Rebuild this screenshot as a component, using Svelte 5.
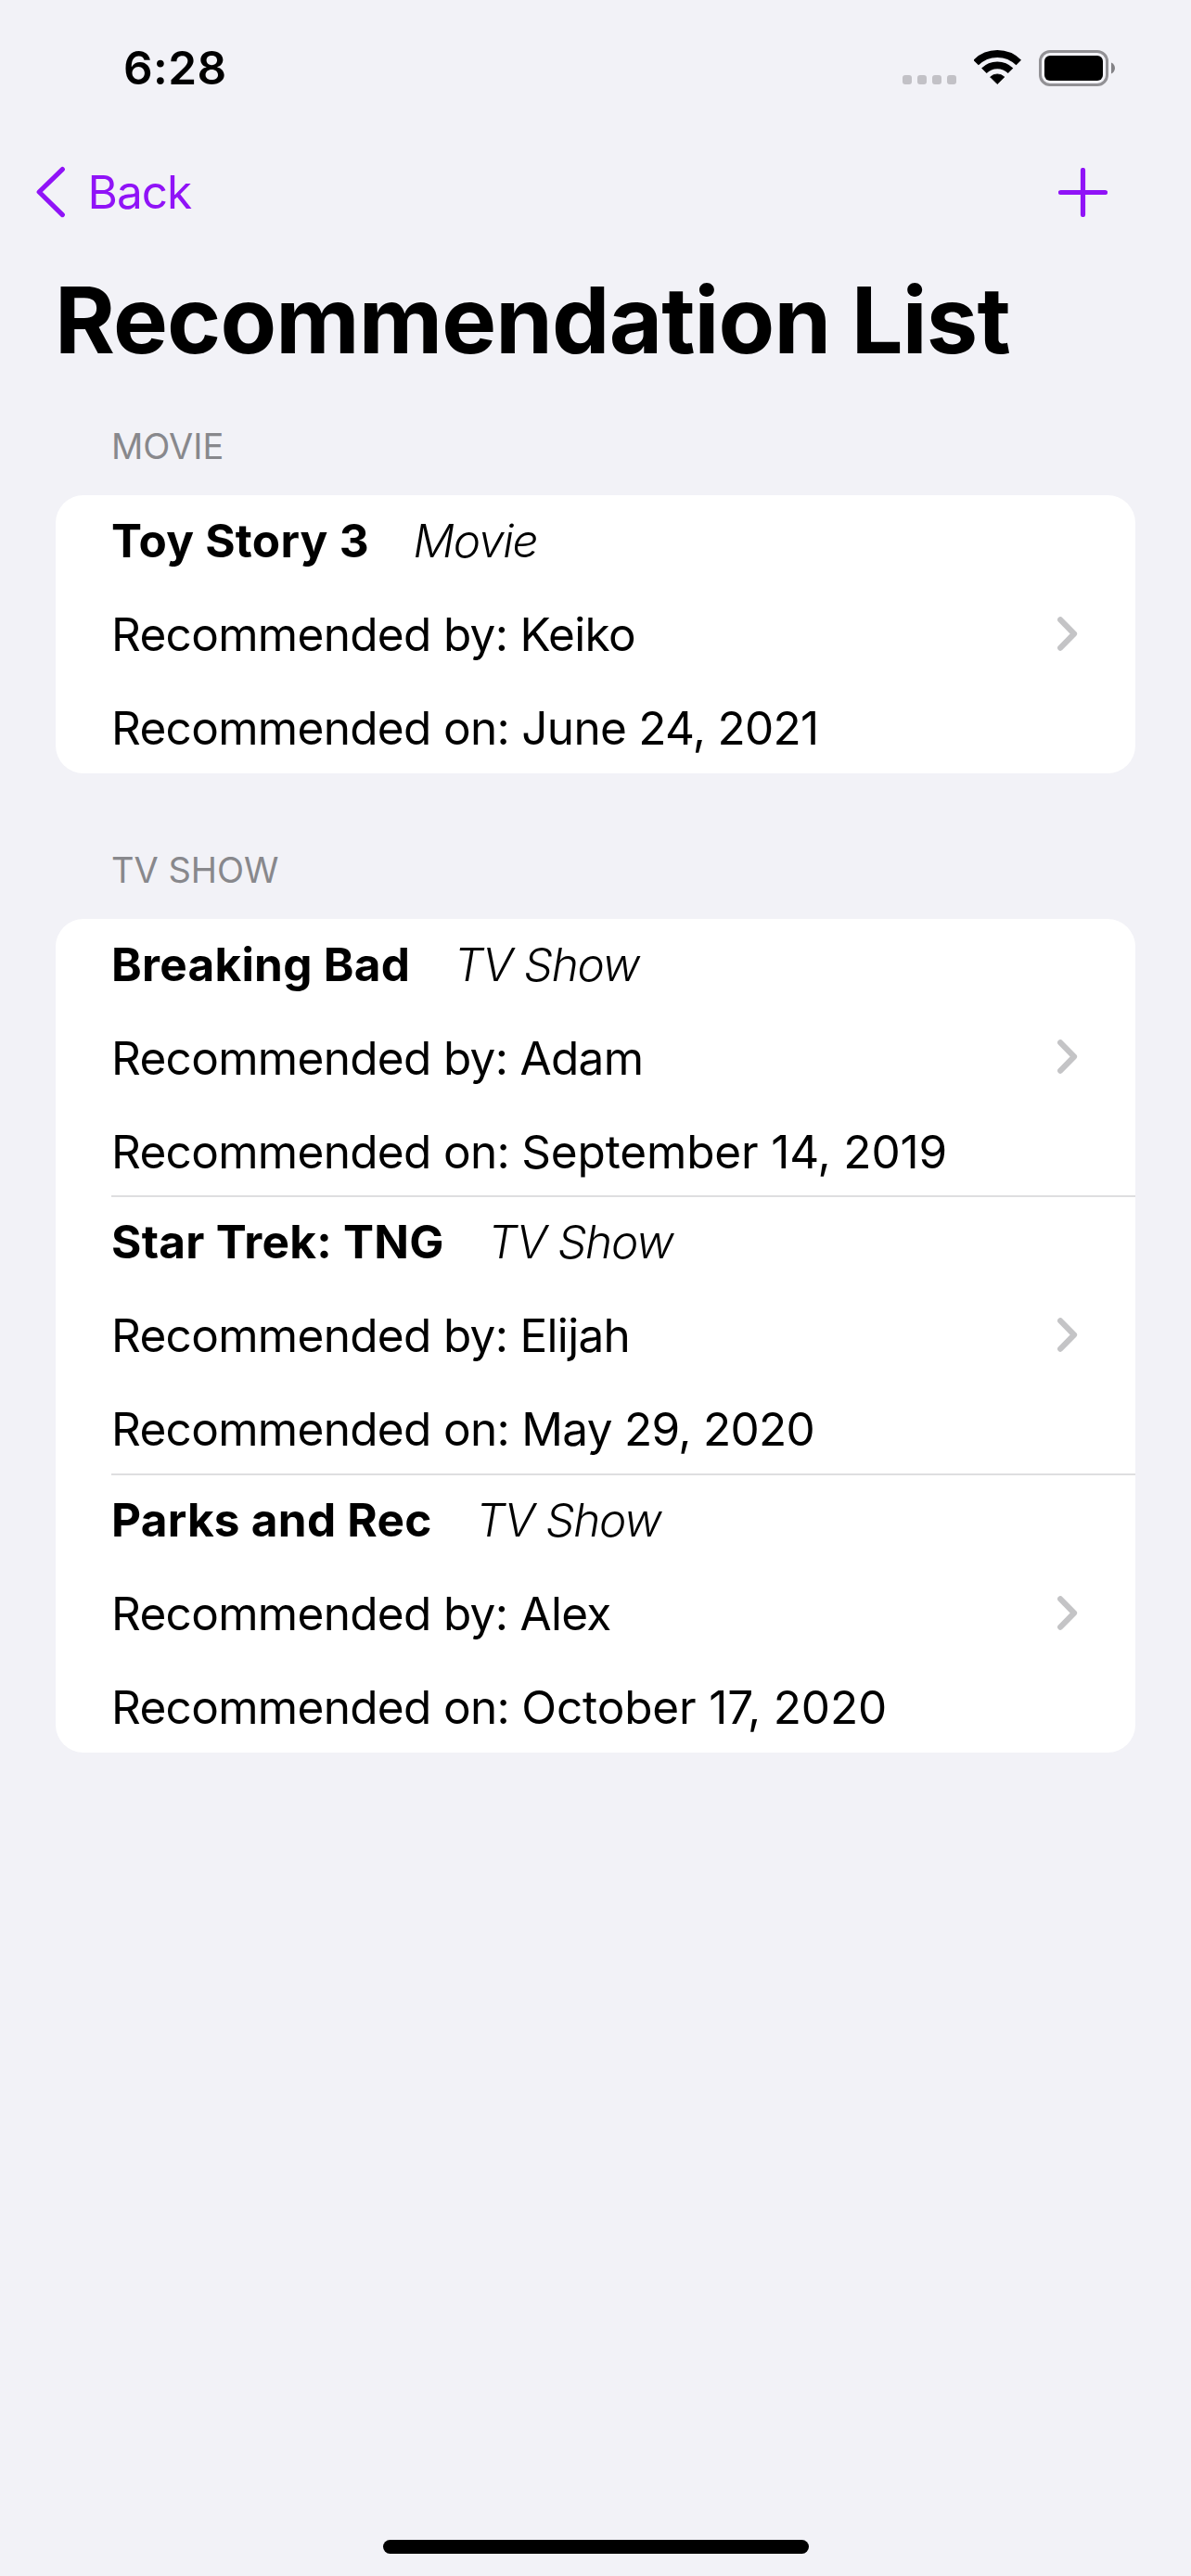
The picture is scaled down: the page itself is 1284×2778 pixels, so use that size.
<script>
  const sections = [
    { name: 'Movie', items: [{ title: 'Toy Story 3', by: 'Keiko', on: 'June 24, 2021' }] },
    {
      name: 'TV Show',
      items: [
        { title: 'Breaking Bad', by: 'Adam', on: 'September 14, 2019' },
        { title: 'Star Trek: TNG', by: 'Elijah', on: 'May 29, 2020' },
        { title: 'Parks and Rec', by: 'Alex', on: 'October 17, 2020' }
      ]
    }
  ];

  const hasTeenDay = (date) => / 1\d,/.test(date);
</script>

<div class="screen">
  <header class="status">
    <span class="time">6:28</span>
    <div class="indicators">
      <div class="dots"><i></i><i></i><i></i><i></i></div>
      <svg class="wifi" width="51" height="38" viewBox="0 0 51 38" aria-hidden="true">
        <path d="M2.15 13.55A32.6 32.6 0 0 1 48.25 13.55" fill="none" stroke="#000" stroke-width="7.8" />
        <path d="M10.9 22.3A20.2 20.2 0 0 1 39.5 22.3" fill="none" stroke="#000" stroke-width="7.8" />
        <path d="M17.6 29A11 11 0 0 1 32.8 29L25.2 36.6Z" fill="#000" stroke="#000" stroke-width=".8" stroke-linejoin="round" />
      </svg>
      <svg class="battery" width="82" height="39" viewBox="0 0 82 39" aria-hidden="true">
        <rect x="1.5" y="1.5" width="72" height="36" rx="10.5" fill="none" stroke="#929195" stroke-width="3" />
        <rect x="6" y="6" width="63" height="27" rx="6" fill="#000" />
        <path d="M78 13.4C80.6 14.6 82 17 82 19.5S80.6 24.4 78 25.6Z" fill="#838286" />
      </svg>
    </div>
  </header>

  <nav class="bar">
    <a class="back" href="#back">
      <svg width="33" height="56" viewBox="0 0 33 56" aria-hidden="true">
        <path d="M29.3 3.6L4.2 28L29.3 52.6" />
      </svg>
      <span>Back</span>
    </a>
    <svg class="add" width="53" height="53" viewBox="0 0 53 53" role="img" aria-label="Add">
      <path d="M26.5 2.5V50.5M2.5 26.5H50.5" />
    </svg>
  </nav>

  <h1>Recommendation List</h1>

  <main>
    {#each sections as section}
      <section>
        <h2>{section.name}</h2>
        <div class="card">
          {#each section.items as item}
            <article class="row">
              <div class="text">
                <p class="heading"><b>{item.title}</b><em>{section.name}</em></p>
                <p>Recommended by: {item.by}</p>
                <p>Recommended on: <span class:teen={hasTeenDay(item.on)}>{item.on}</span></p>
              </div>
              <svg class="chevron" width="22" height="37" viewBox="0 0 22 37" aria-hidden="true">
                <path d="M3.2 3.3L18 18.5L3.2 33.7" />
              </svg>
            </article>
          {/each}
        </div>
      </section>
    {/each}
  </main>

  <footer><div class="home"></div></footer>
</div>

<style>
  :global(body) {
    background: #f2f2f7;
  }
  .screen {
    box-sizing: border-box;
    width: 1284px;
    height: 2778px;
    display: flex;
    flex-direction: column;
    background: #f2f2f7;
    color: #000;
    font-family: Inter, 'Liberation Sans', sans-serif;
    font-size: 49.5px;
    line-height: 60px;
  }
  h1,
  h2,
  p {
    margin: 0;
  }
  svg {
    display: block;
    flex: none;
  }
  .status {
    box-sizing: border-box;
    height: 141px;
    padding: 5px 82px 0 133px;
    display: flex;
    align-items: center;
    justify-content: space-between;
  }
  .time {
    font-weight: 600;
    letter-spacing: 0.4px;
  }
  .indicators {
    display: flex;
    align-items: flex-end;
  }
  .dots {
    display: flex;
    gap: 6px;
    margin: 0 19px 2px 0;
  }
  .dots i {
    width: 10px;
    height: 10px;
    border-radius: 3px;
    background: #c2c1c6;
  }
  .wifi {
    margin: 0 19px 1px 0;
  }
  .bar {
    box-sizing: border-box;
    height: 132px;
    padding: 0 90px 0 38px;
    display: flex;
    align-items: center;
    justify-content: space-between;
  }
  .back {
    display: flex;
    align-items: center;
    gap: 23.5px;
    color: #9013f7;
    text-decoration: none;
    letter-spacing: -0.95px;
  }
  .back path,
  .add path {
    fill: none;
    stroke: #9013f7;
    stroke-width: 5.2;
    stroke-linecap: round;
    stroke-linejoin: round;
  }
  h1 {
    margin: 12px 0 53px 59px;
    font-size: 99px;
    line-height: 120px;
    font-weight: 700;
    letter-spacing: -0.87px;
    white-space: nowrap;
  }
  main {
    flex: 1;
    display: flex;
    flex-direction: column;
    gap: 81px;
    padding: 0 60px;
  }
  h2 {
    margin: 0 0 30px 60px;
    font-size: 38px;
    line-height: 46px;
    font-weight: 400;
    color: #88888c;
    text-transform: uppercase;
  }
  .card {
    background: #fff;
    border-radius: 30px;
    padding-bottom: 1px;
  }
  .row {
    height: 298px;
    margin-left: 60px;
    padding-right: 62px;
    display: flex;
    align-items: center;
    justify-content: space-between;
  }
  .row:only-child {
    height: 299px;
  }
  .row + .row {
    border-top: 2px solid #dedee0;
  }
  .text {
    align-self: flex-start;
    padding-top: 18.5px;
    display: flex;
    flex-direction: column;
    gap: 41px;
    white-space: nowrap;
    letter-spacing: -0.69px;
  }
  .row + .row .text {
    padding-top: 18px;
  }
  .heading {
    display: flex;
    gap: 47.7px;
  }
  .heading b {
    font-weight: 700;
    letter-spacing: 0.26px;
  }
  .heading em {
    font-weight: 300;
    letter-spacing: -1.3px;
  }
  .teen {
    letter-spacing: -0.15px;
  }
  .chevron {
    margin-bottom: 1px;
  }
  .chevron path {
    fill: none;
    stroke: #c4c4c6;
    stroke-width: 6.2;
    stroke-linecap: round;
    stroke-linejoin: round;
  }
  footer {
    display: flex;
    justify-content: center;
    padding-bottom: 24px;
  }
  .home {
    width: 459px;
    height: 15px;
    border-radius: 7.5px;
    background: #000;
  }
</style>
